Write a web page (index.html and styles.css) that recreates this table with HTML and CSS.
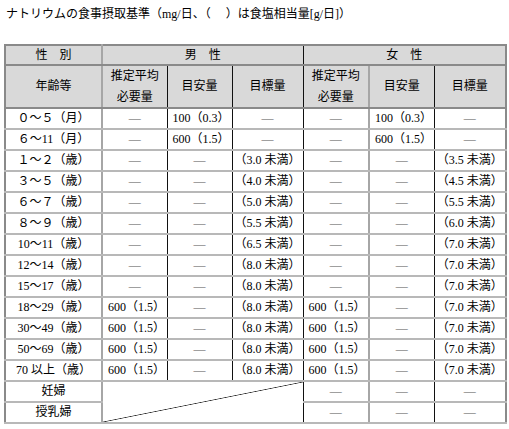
FILE: index.html
```html
<!DOCTYPE html>
<html lang="ja">
<head>
<meta charset="utf-8">
<title>ナトリウムの食事摂取基準</title>
<link rel="stylesheet" href="styles.css">
</head>
<body>
<p class="title">ナトリウムの食事摂取基準（mg/日、（　 ）は食塩相当量[g/日]）</p>
<table class="tbl">
  <colgroup>
    <col class="w1"><col class="w2"><col class="w3"><col class="w4"><col class="w5"><col class="w6"><col class="w7">
  </colgroup>
  <thead>
    <tr class="h1">
      <th class="c1">性　別</th>
      <th colspan="3">男　性</th>
      <th colspan="3" class="g">女　性</th>
    </tr>
    <tr class="h2">
      <th class="c1">年齢等</th>
      <th>推定平均<br>必要量</th>
      <th>目安量</th>
      <th>目標量</th>
      <th class="g">推定平均<br>必要量</th>
      <th>目安量</th>
      <th>目標量</th>
    </tr>
  </thead>
  <tbody>
    <tr><td class="c1">０～５（月）</td><td><span class="d">—</span></td><td class="l">100（0.3）</td><td><span class="d">—</span></td><td class="g"><span class="d">—</span></td><td class="l">100（0.3）</td><td><span class="d">—</span></td></tr>
    <tr><td class="c1">６～11（月）</td><td><span class="d">—</span></td><td class="l">600（1.5）</td><td><span class="d">—</span></td><td class="g"><span class="d">—</span></td><td class="l">600（1.5）</td><td><span class="d">—</span></td></tr>
    <tr><td class="c1">１～２（歳）</td><td><span class="d">—</span></td><td><span class="d">—</span></td><td>（3.0 未満）</td><td class="g"><span class="d">—</span></td><td><span class="d">—</span></td><td>（3.5 未満）</td></tr>
    <tr><td class="c1">３～５（歳）</td><td><span class="d">—</span></td><td><span class="d">—</span></td><td>（4.0 未満）</td><td class="g"><span class="d">—</span></td><td><span class="d">—</span></td><td>（4.5 未満）</td></tr>
    <tr><td class="c1">６～７（歳）</td><td><span class="d">—</span></td><td><span class="d">—</span></td><td>（5.0 未満）</td><td class="g"><span class="d">—</span></td><td><span class="d">—</span></td><td>（5.5 未満）</td></tr>
    <tr><td class="c1">８～９（歳）</td><td><span class="d">—</span></td><td><span class="d">—</span></td><td>（5.5 未満）</td><td class="g"><span class="d">—</span></td><td><span class="d">—</span></td><td>（6.0 未満）</td></tr>
    <tr><td class="c1">10～11（歳）</td><td><span class="d">—</span></td><td><span class="d">—</span></td><td>（6.5 未満）</td><td class="g"><span class="d">—</span></td><td><span class="d">—</span></td><td>（7.0 未満）</td></tr>
    <tr><td class="c1">12～14（歳）</td><td><span class="d">—</span></td><td><span class="d">—</span></td><td>（8.0 未満）</td><td class="g"><span class="d">—</span></td><td><span class="d">—</span></td><td>（7.0 未満）</td></tr>
    <tr><td class="c1">15～17（歳）</td><td><span class="d">—</span></td><td><span class="d">—</span></td><td>（8.0 未満）</td><td class="g"><span class="d">—</span></td><td><span class="d">—</span></td><td>（7.0 未満）</td></tr>
    <tr><td class="c1">18～29（歳）</td><td class="l">600（1.5）</td><td><span class="d">—</span></td><td>（8.0 未満）</td><td class="g l">600（1.5）</td><td><span class="d">—</span></td><td>（7.0 未満）</td></tr>
    <tr><td class="c1">30～49（歳）</td><td class="l">600（1.5）</td><td><span class="d">—</span></td><td>（8.0 未満）</td><td class="g l">600（1.5）</td><td><span class="d">—</span></td><td>（7.0 未満）</td></tr>
    <tr><td class="c1">50～69（歳）</td><td class="l">600（1.5）</td><td><span class="d">—</span></td><td>（8.0 未満）</td><td class="g l">600（1.5）</td><td><span class="d">—</span></td><td>（7.0 未満）</td></tr>
    <tr><td class="c1">70 以上（歳）</td><td class="l">600（1.5）</td><td><span class="d">—</span></td><td>（8.0 未満）</td><td class="g l">600（1.5）</td><td><span class="d">—</span></td><td>（7.0 未満）</td></tr>
    <tr><td class="c1">妊婦</td><td colspan="3" rowspan="2" class="diag"></td><td class="g"><span class="d">—</span></td><td><span class="d">—</span></td><td><span class="d">—</span></td></tr>
    <tr><td class="c1">授乳婦</td><td class="g"><span class="d">—</span></td><td><span class="d">—</span></td><td><span class="d">—</span></td></tr>
  </tbody>
</table>
</body>
</html>
```

FILE: styles.css
```css
body {
  margin: 0;
  background: #ffffff;
  color: #000000;
  font-family: "Liberation Serif", "Noto Sans CJK JP", serif;
  font-size: 12px;
}

.title {
  margin: 0;
  padding: 6px 0 0 6px;
  line-height: 16px;
  font-size: 12px;
}

.tbl {
  margin: 22px 0 0 4px;
  width: 501px;
  table-layout: fixed;
  border-collapse: collapse;
  border: 2px solid #8a8a8a;
}

.w1 { width: 97px; }
.w2 { width: 65px; }
.w3 { width: 65px; }
.w4 { width: 71px; }
.w5 { width: 66px; }
.w6 { width: 65px; }
.w7 { width: 72px; }

.tbl th,
.tbl td {
  padding: 0;
  border-top: 2px solid #b8b8b8;
  border-bottom: 2px solid #b8b8b8;
  border-left: 1px solid #111111;
  border-right: 1px solid #111111;
  text-align: center;
  white-space: nowrap;
  overflow: hidden;
  font-weight: normal;
  line-height: 19px;
}

.tbl th {
  background: #d9d9d9;
  border-top-color: #8a8a8a;
  border-bottom-color: #8a8a8a;
}

.h1 th { line-height: 18px; }
.h2 th { line-height: 20.5px; }

.tbl .c1 { border-right: 2px solid #a6a6a6; }
.tbl .g { border-left: 1px solid #111111; }
.tbl td.g + td { border-left: 2px solid #a6a6a6; }
.tbl th.g + th { border-left: 2px solid #a6a6a6; }

.tbl .l {
  text-align: left;
  padding-left: 5px;
}

.d {
  color: #555555;
}

.tbl .diag {
  background: linear-gradient(to bottom right,
    transparent calc(50% - 0.7px),
    #333333 50%,
    transparent calc(50% + 0.7px));
}
```
